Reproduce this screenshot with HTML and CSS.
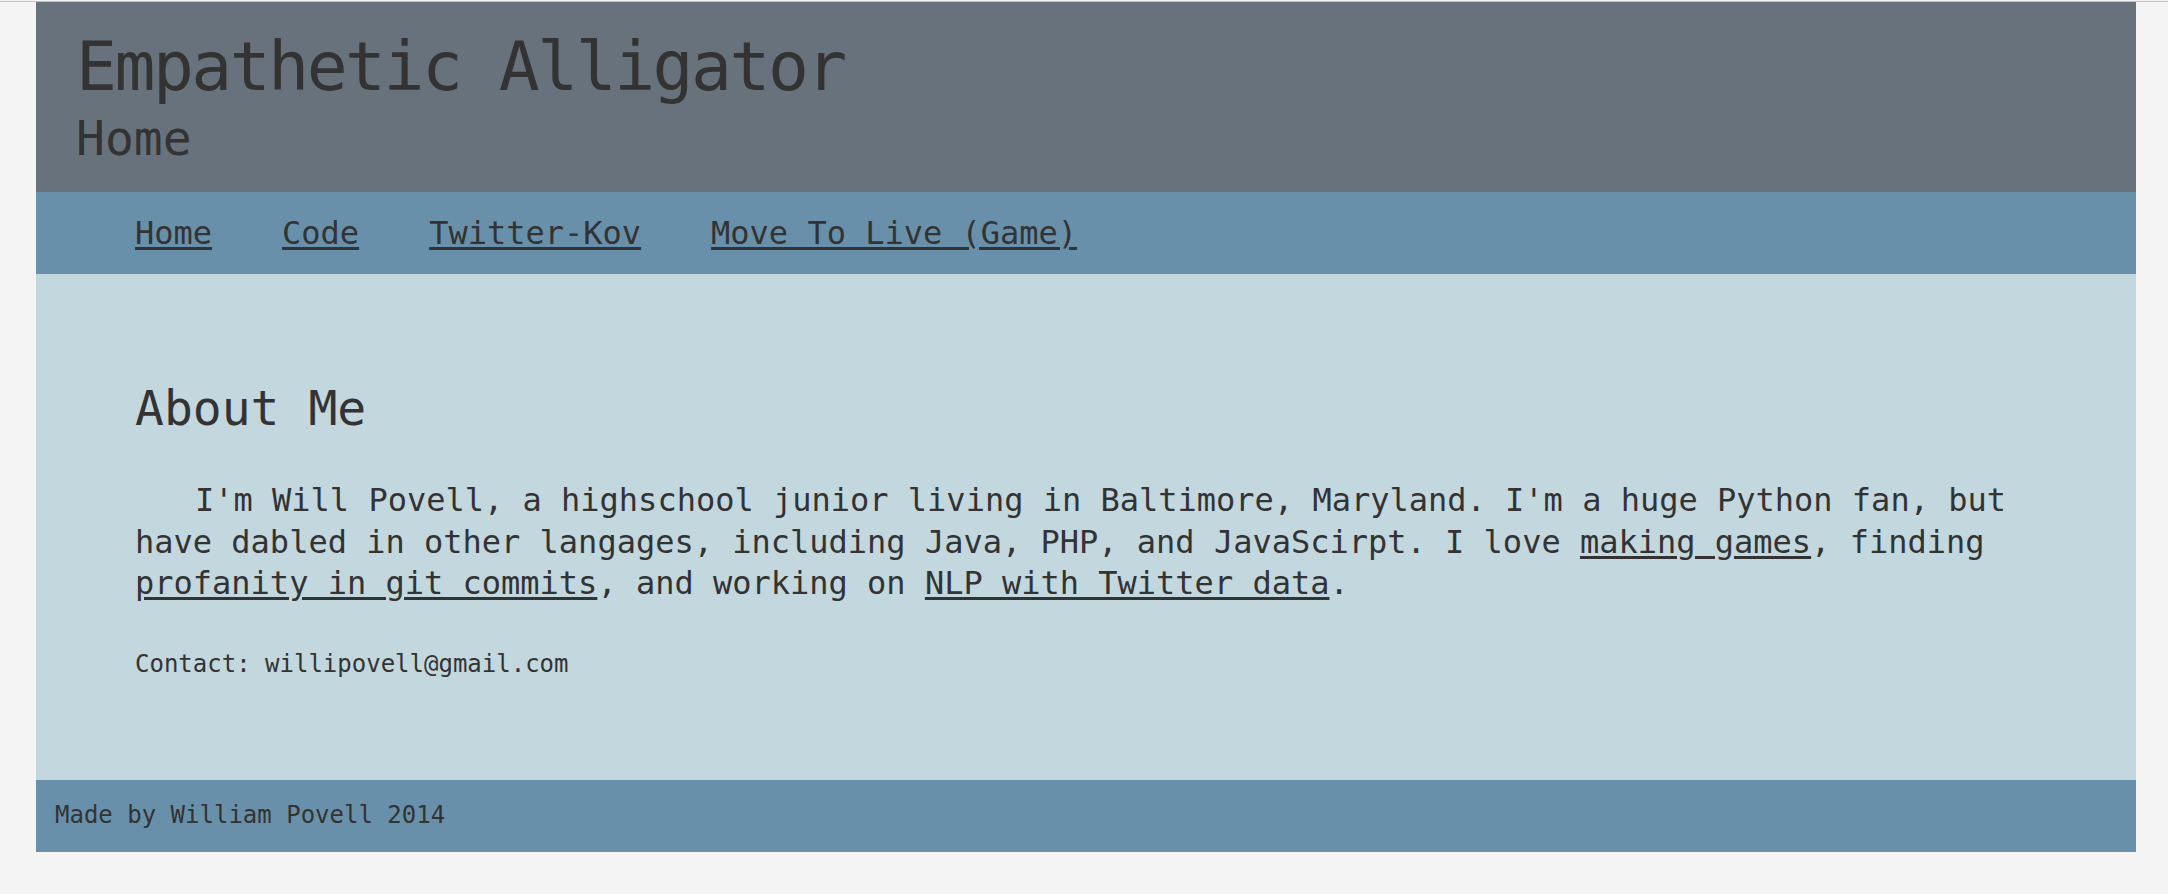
FILE: index.html
```html
<!DOCTYPE html>
<html lang="en">
<head>
<meta charset="utf-8">
<title>Empathetic Alligator</title>
<link rel="stylesheet" href="styles.css">
</head>
<body>
<div class="rule"></div>
<div class="page">
  <header class="masthead">
    <h1 class="site-title">Empathetic Alligator</h1>
    <div class="page-title">Home</div>
  </header>
  <nav class="nav">
    <a href="#">Home</a>
    <a href="#">Code</a>
    <a href="#">Twitter-Kov</a>
    <a href="#">Move To Live (Game)</a>
  </nav>
  <main class="content">
    <h2 class="section-title">About Me</h2>
    <p class="intro">I'm Will Povell, a highschool junior living in Baltimore, Maryland. I'm a huge Python fan, but have dabled in other langages, including Java, PHP, and JavaScirpt. I love <a href="#">making games</a>, finding <a href="#">profanity in git commits</a>, and working on <a href="#">NLP with Twitter data</a>.</p>
    <p class="contact">Contact: willipovell@gmail.com</p>
  </main>
  <footer class="footer">Made by William Povell 2014</footer>
</div>
</body>
</html>
```
FILE: styles.css
```css
html {
  background: #f4f4f4;
}
body {
  margin: 0;
  padding-top: 1px;
  font-family: "DejaVu Sans Mono", "Liberation Mono", monospace;
  color: #333333;
}
.rule {
  height: 1px;
  background: #c2c2c2;
}
.page {
  margin: 0 32px 0 36px;
  width: 2100px;
}
.masthead {
  background: #68727c;
  padding: 23px 36px 25px 40px;
}
.site-title {
  margin: 0;
  font-size: 68px;
  line-height: 84px;
  font-weight: normal;
  letter-spacing: -2.5px;
}
.page-title {
  font-size: 48px;
  line-height: 58px;
  letter-spacing: 0;
}
.nav {
  background: #6890aa;
  padding: 21px 0 21px 99px;
  display: flex;
  gap: 70px;
  font-size: 32px;
  line-height: 40px;
}
.nav a,
.intro a {
  color: #333333;
  text-decoration: underline;
  text-underline-offset: 3px;
}
.content {
  display: block;
  background: #c3d7df;
  padding: 106px 101px 101px 99px;
}
.section-title {
  margin: 0 0 44px;
  font-size: 48px;
  line-height: 56px;
  font-weight: normal;
}
.intro {
  margin: 0 0 44px;
  font-size: 32px;
  line-height: 41.5px;
  text-indent: 60px;
}
.contact {
  margin: 0;
  font-size: 24px;
  line-height: 30px;
}
.footer {
  background: #6890aa;
  padding: 20px 20px 22px 19px;
  font-size: 24px;
  line-height: 30px;
}
```
